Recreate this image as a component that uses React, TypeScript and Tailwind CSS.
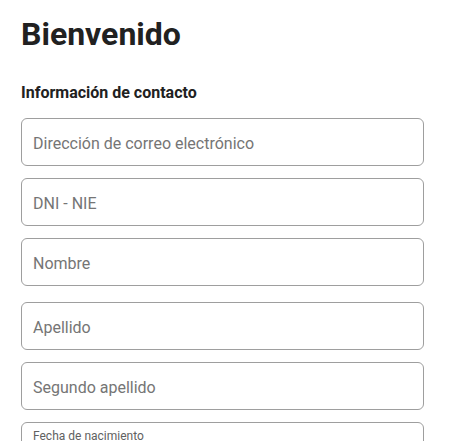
import React from 'react';

const Field = ({ placeholder, className = '' }: { placeholder: string; className?: string }) => (
  <div className={`h-12 w-[403px] rounded-md border border-[#9e9e9e] bg-white flex items-center px-[11px] pt-[4px] ${className}`}>
    <span className="text-base text-[#757575]">{placeholder}</span>
  </div>
);

const App = () => {
  return (
    <div className="min-h-screen bg-white pl-[21px] pt-[14px] font-['Roboto',sans-serif] text-[#212121] overflow-hidden h-[441px]">
      <h1 className="text-[32px] font-bold leading-[40px]">Bienvenido</h1>
      <h2 className="mt-[29px] text-base font-bold leading-5">Información de contacto</h2>
      <form className="mt-[15px] flex flex-col">
        <Field placeholder="Dirección de correo electrónico" />
        <Field placeholder="DNI - NIE" className="mt-3" />
        <Field placeholder="Nombre" className="mt-3" />
        <Field placeholder="Apellido" className="mt-4" />
        <Field placeholder="Segundo apellido" className="mt-3" />
        <div className="mt-3 h-12 w-[403px] rounded-md border border-[#9e9e9e] bg-white px-[11px] pt-[5px]">
          <span className="block text-xs leading-4 text-[#616161]">Fecha de nacimiento</span>
        </div>
      </form>
    </div>
  );
};

export default App;
